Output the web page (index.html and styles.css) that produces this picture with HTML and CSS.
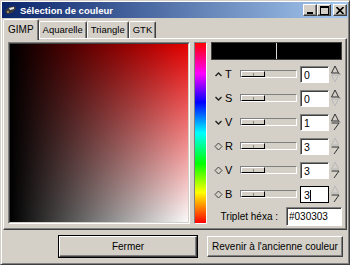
FILE: index.html
```html
<!DOCTYPE html>
<html lang="fr">
<head>
  <meta charset="UTF-8">
  <title>Sélection de couleur</title>
  <link rel="stylesheet" href="styles.css">
</head>
<body>
<div class="window">
  <div class="titlebar">
    <svg class="app-icon" width="13" height="12" viewBox="0 0 13 12">
      <path d="M1 7 L5 3 L11 2 L12 5 L8 9 L3 10 Z" fill="#3a3a3a"/>
      <path d="M5 4 L10 3 L10 5 L6 6 Z" fill="#e8e8e8"/>
      <circle cx="4" cy="8" r="1" fill="#c0a060"/>
    </svg>
    <span class="title">Sélection de couleur</span>
    <div class="caption-buttons">
      <span class="cap-btn"><svg width="8" height="7"><rect x="1" y="5" width="6" height="2" fill="#000"/></svg></span>
      <span class="cap-btn"><svg width="9" height="9"><rect x="0.5" y="0.5" width="8" height="8" fill="none" stroke="#000"/><rect x="0" y="0" width="9" height="2" fill="#000"/></svg></span>
      <span class="cap-btn close"><svg width="8" height="7"><path d="M0.5 0 L7.5 7 M7.5 0 L0.5 7" stroke="#000" stroke-width="1.6"/></svg></span>
    </div>
  </div>

  <div class="tabs">
    <span class="tab active">GIMP</span>
    <span class="tab">Aquarelle</span>
    <span class="tab">Triangle</span>
    <span class="tab">GTK</span>
  </div>

  <div class="panel">
    <div class="sv-box"><div class="sv"></div></div>
    <div class="hue"></div>
    <div class="controls">
      <div class="preview"><div class="swatch"></div><div class="swatch"></div></div>

      <div class="row">
        <svg class="radio" width="9" height="9" viewBox="0 0 9 9"><path d="M1.5 6 L4.5 3 L7.5 6" fill="none" stroke="#222" stroke-width="1.4"/></svg>
        <span class="letter">T</span>
        <div class="slider"><div class="thumb"></div></div>
        <div class="entry">0</div>
        <svg class="spin" width="11" height="18" viewBox="0 0 11 18"><path d="M1.5 8 L5 1 L8.5 8 Z M8.5 8 L10 9.5" fill="none" stroke="#333"/><path d="M1.5 10 L5 17 L8.5 10 Z" fill="none" stroke="#b8b8b8"/></svg>
      </div>

      <div class="row">
        <svg class="radio" width="9" height="9" viewBox="0 0 9 9"><path d="M1.5 3 L4.5 6 L7.5 3" fill="none" stroke="#222" stroke-width="1.4"/></svg>
        <span class="letter">S</span>
        <div class="slider"><div class="thumb"></div></div>
        <div class="entry">0</div>
        <svg class="spin" width="11" height="18" viewBox="0 0 11 18"><path d="M1.5 8 L5 1 L8.5 8 Z M8.5 8 L10 9.5" fill="none" stroke="#333"/><path d="M1.5 10 L5 17 L8.5 10 Z" fill="none" stroke="#b8b8b8"/></svg>
      </div>

      <div class="row">
        <svg class="radio" width="9" height="9" viewBox="0 0 9 9"><path d="M1.5 3 L4.5 6 L7.5 3" fill="none" stroke="#222" stroke-width="1.4"/></svg>
        <span class="letter">V</span>
        <div class="slider"><div class="thumb"></div></div>
        <div class="entry">1</div>
        <svg class="spin" width="11" height="18" viewBox="0 0 11 18"><path d="M1.5 8 L5 1 L8.5 8 Z M8.5 8 L10 9.5" fill="none" stroke="#333"/><path d="M1.5 10 L9 10 M9 10 L4 17" fill="none" stroke="#333"/></svg>
      </div>

      <div class="row">
        <svg class="radio" width="9" height="9" viewBox="0 0 9 9"><path d="M4.5 1 L8 4.5 L4.5 8 L1 4.5 Z" fill="none" stroke="#444"/></svg>
        <span class="letter">R</span>
        <div class="slider"><div class="thumb"></div></div>
        <div class="entry">3</div>
        <svg class="spin" width="11" height="18" viewBox="0 0 11 18"><path d="M1.5 8 L5 1 L8.5 8 Z" fill="none" stroke="#b8b8b8"/><path d="M1.5 10 L9 10 M9 10 L4 17" fill="none" stroke="#333"/></svg>
      </div>

      <div class="row">
        <svg class="radio" width="9" height="9" viewBox="0 0 9 9"><path d="M4.5 1 L8 4.5 L4.5 8 L1 4.5 Z" fill="none" stroke="#444"/></svg>
        <span class="letter">V</span>
        <div class="slider"><div class="thumb"></div></div>
        <div class="entry">3</div>
        <svg class="spin" width="11" height="18" viewBox="0 0 11 18"><path d="M1.5 8 L5 1 L8.5 8 Z" fill="none" stroke="#b8b8b8"/><path d="M1.5 10 L9 10 M9 10 L4 17" fill="none" stroke="#333"/></svg>
      </div>

      <div class="row">
        <svg class="radio" width="9" height="9" viewBox="0 0 9 9"><path d="M4.5 1 L8 4.5 L4.5 8 L1 4.5 Z" fill="none" stroke="#444"/></svg>
        <span class="letter">B</span>
        <div class="slider"><div class="thumb"></div></div>
        <div class="entry focus">3<span class="caret"></span></div>
        <svg class="spin" width="11" height="18" viewBox="0 0 11 18"><path d="M1.5 8 L5 1 L8.5 8 Z" fill="none" stroke="#b8b8b8"/><path d="M1.5 10 L9 10 M9 10 L4 17" fill="none" stroke="#333"/></svg>
      </div>

      <div class="hex-row">
        <span class="hex-label">Triplet héxa :</span>
        <div class="entry hex">#030303</div>
      </div>
    </div>
  </div>

  <div class="actions">
    <span class="button default"><span class="button-inner">Fermer</span></span>
    <span class="button">Revenir à l'ancienne couleur</span>
  </div>
</div>
</body>
</html>
```

FILE: styles.css
```css
body {
  margin: 0;
  background: #d4d0c8;
  font-family: "Liberation Sans", Arial, sans-serif;
  font-size: 9.5px;
  color: #000;
}

.window {
  width: 350px;
  height: 265px;
  box-sizing: border-box;
  border: 1px solid;
  border-color: #d4d0c8 #404040 #404040 #d4d0c8;
  box-shadow: inset 1px 1px #fff, inset -1px -1px #808080;
  padding: 1px;
  overflow: hidden;
}

/* title bar */
.titlebar {
  height: 16px;
  display: flex;
  align-items: center;
  background: linear-gradient(to right, #0a246a, #a6caf0);
  color: #fff;
  padding-left: 2px;
}

.app-icon {
  margin-right: 3px;
}

.title {
  font-weight: bold;
  flex: 1;
}

.caption-buttons {
  display: flex;
  margin-right: 1px;
}

.cap-btn {
  width: 14px;
  height: 12px;
  box-sizing: border-box;
  background: #d4d0c8;
  border: 1px solid;
  border-color: #fff #404040 #404040 #fff;
  box-shadow: inset -1px -1px #808080;
  display: flex;
  align-items: center;
  justify-content: center;
}

.cap-btn.close {
  margin-left: 2px;
}

/* tabs */
.tabs {
  display: flex;
  align-items: flex-end;
  height: 19px;
  margin-top: 1px;
  padding-left: 1px;
  position: relative;
  z-index: 1;
}

.tab {
  height: 17px;
  line-height: 16px;
  box-sizing: border-box;
  padding: 0 3px;
  border: 1px solid;
  border-bottom: none;
  border-color: #fff #404040 transparent #fff;
  box-shadow: inset -1px 0 #808080;
  border-radius: 2px 2px 0 0;
  background: #d4d0c8;
}

.tab.active {
  height: 21px;
  line-height: 19px;
  margin-bottom: -2px;
  padding: 0 4px;
  font-size: 10px;
}

/* notebook page */
.panel {
  width: 344px;
  height: 192px;
  box-sizing: border-box;
  margin-left: 1px;
  border: 1px solid;
  border-color: #fff #404040 #404040 #fff;
  box-shadow: inset -1px -1px #808080;
  padding: 3px 4px;
  display: flex;
  align-items: flex-start;
}

.sv-box {
  width: 182px;
  height: 182px;
  box-sizing: border-box;
  border: 1px solid;
  border-color: #808080 #fff #fff #808080;
}

.sv {
  width: 100%;
  height: 100%;
  box-sizing: border-box;
  border: 1px solid;
  border-color: #404040 #d4d0c8 #d4d0c8 #404040;
  background: linear-gradient(to right, #000, rgba(0, 0, 0, 0)),
              linear-gradient(to bottom, #e40000, #fafafa);
}

.hue {
  width: 13px;
  height: 182px;
  box-sizing: border-box;
  margin-left: 4px;
  border: 1px solid;
  border-color: #808080 #fff #fff #808080;
  background: linear-gradient(to bottom, #f00, #f0f 17%, #00f 33%, #0ff 50%, #0f0 67%, #ff0 83%, #f00);
}

.controls {
  width: 131px;
  margin-left: 4px;
}

.preview {
  height: 18px;
  display: flex;
  gap: 1px;
  background: #d8d8d8;
  box-sizing: border-box;
  border: 1px solid #404040;
}

.swatch {
  flex: 1;
  background: #000;
}

.row {
  height: 24px;
  display: flex;
  align-items: center;
}

.preview + .row {
  margin-top: 2px;
}

.radio {
  margin-left: 3px;
}

.letter {
  width: 15px;
  margin-left: 2px;
  font-size: 11px;
}

.slider {
  width: 57px;
  height: 8px;
  box-sizing: border-box;
  border: 1px solid;
  border-color: #808080 #fff #fff #808080;
  background: #d4d0c8;
}

.thumb {
  width: 24px;
  height: 6px;
  box-sizing: border-box;
  border: 1px solid;
  border-color: #fff #000 #000 #fff;
  background: linear-gradient(#808080, #808080) center / 1px 3px no-repeat, #d4d0c8;
}

.entry {
  width: 29px;
  height: 17px;
  box-sizing: border-box;
  margin-left: 3px;
  border: 1px solid;
  border-color: #808080 #fff #fff #808080;
  box-shadow: inset 1px 1px #404040;
  background: #fff;
  padding: 1px 0 0 3px;
  font-size: 10.5px;
  line-height: 14px;
}

.entry.focus {
  border-color: #000;
  box-shadow: none;
}

.caret {
  display: inline-block;
  width: 1px;
  height: 11px;
  background: #000;
  vertical-align: -2px;
}

.spin {
  margin-left: 1px;
}

.hex-row {
  height: 20px;
  display: flex;
  align-items: center;
  justify-content: flex-end;
}

.hex-label {
  margin-right: 5px;
  font-size: 10px;
}

.entry.hex {
  width: 56px;
  height: 19px;
  line-height: 16px;
  padding-left: 2px;
  font-size: 10px;
}

/* bottom buttons */
.actions {
  display: flex;
  justify-content: flex-end;
  align-items: center;
  gap: 9px;
  padding: 5px 5px 0 0;
}

.button {
  width: 136px;
  height: 21px;
  box-sizing: border-box;
  border: 1px solid;
  border-color: #fff #404040 #404040 #fff;
  box-shadow: inset -1px -1px #808080;
  display: flex;
  align-items: center;
  justify-content: center;
  font-size: 10px;
}

.button.default {
  width: 140px;
  height: 23px;
  border: 1px solid #000;
  box-shadow: none;
  padding: 0;
}

.button-inner {
  width: 100%;
  height: 100%;
  box-sizing: border-box;
  border: 1px solid;
  border-color: #fff #404040 #404040 #fff;
  box-shadow: inset -1px -1px #808080;
  display: flex;
  align-items: center;
  justify-content: center;
}
```
